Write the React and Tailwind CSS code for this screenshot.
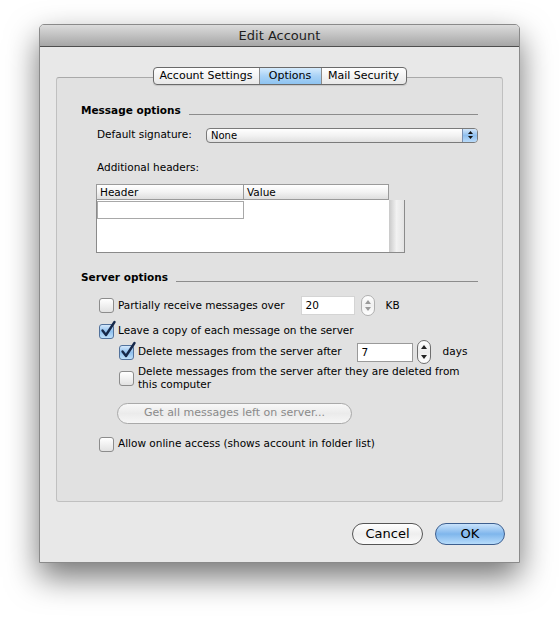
import React from "react";

function Checkbox({ checked }) {
  return (
    <span className="relative inline-block w-[15px] h-[15px] shrink-0">
      {checked ? (
        <span className="block w-full h-full rounded-[3px] border border-[#52729c] bg-gradient-to-b from-[#d4e8fb] via-[#8fc0ee] to-[#bfe0fb]" />
      ) : (
        <span className="block w-full h-full rounded-[3px] border border-[#8c8c8c] bg-gradient-to-b from-[#ffffff] to-[#e2e2e2]" />
      )}
      {checked && (
        <svg className="absolute left-[1px] top-[-4px]" width="17" height="18" viewBox="0 0 17 18">
          <path d="M2.5 10.5 L6 15 L14.5 2" stroke="#16284a" strokeWidth="2.4" fill="none" strokeLinecap="round" strokeLinejoin="round" />
        </svg>
      )}
    </span>
  );
}

function Stepper({ dim, tall }) {
  const c = dim ? "#9a9a9a" : "#222";
  return (
    <div
      className={
        tall
          ? "flex flex-col items-center justify-between w-[14px] h-[24px] py-[4px] rounded-[7px] border border-[#6e6e6e] bg-gradient-to-b from-[#ffffff] via-[#ececec] to-[#ffffff]"
          : "flex flex-col items-center justify-between w-[14px] h-[21px] py-[4px] rounded-[7px] border border-[#b0b0b0] bg-gradient-to-b from-[#ffffff] via-[#f0f0f0] to-[#ffffff]"
      }
    >
      <svg width="6" height="4" viewBox="0 0 6 4"><path d="M3 0 L6 4 L0 4 Z" fill={c} /></svg>
      <svg width="6" height="4" viewBox="0 0 6 4"><path d="M0 0 L6 0 L3 4 Z" fill={c} /></svg>
    </div>
  );
}

export default function App() {
  return (
    <div className="w-[560px] h-[618px] bg-white pl-[39px] pt-[24px] font-['Lucida_Grande','DejaVu_Sans',sans-serif] text-[10.5px] text-black whitespace-nowrap">
      <div className="w-[481px] h-[539px] flex flex-col bg-[#e8e8e8] border border-[#8a8a8a] rounded-t-[5px] shadow-[0_14px_32px_rgba(0,0,0,0.55)]">
        {/* Title bar */}
        <div className="h-[22px] shrink-0 flex items-center justify-center rounded-t-[4px] bg-gradient-to-b from-[#dcdcdc] to-[#a6a6a6] border-b border-[#4e4e4e] text-[13px] text-[#1e1e1e]">
          Edit Account
        </div>

        {/* Tabs + group box */}
        <div className="flex flex-col px-[16px] pt-[20px]">
          <div className="relative z-10 flex justify-center -mb-[8px]">
            <div className="flex h-[18px] rounded-[4px] border border-[#6a6a6a] overflow-hidden bg-gradient-to-b from-[#ffffff] to-[#e8e8e8] shadow-[0_1px_1px_rgba(0,0,0,0.12)] text-[11px]">
              <div className="w-[106px] flex items-center justify-center border-r border-[#8a8a8a]">Account Settings</div>
              <div className="w-[62px] flex items-center justify-center border-r border-[#8a8a8a] bg-gradient-to-b from-[#d7ecfd] via-[#a9d2f6] to-[#8ec4f1]">Options</div>
              <div className="w-[84px] flex items-center justify-center">Mail Security</div>
            </div>
          </div>

          <div className="h-[425px] rounded-[3px] border border-[#c0c0c0] border-t-[#a9a9a9] bg-[#e1e1e1] flex flex-col pt-[26px] pr-[24px]">
            {/* Message options header */}
            <div className="flex items-center h-[14px] pl-[24px]">
              <span className="font-bold">Message options</span>
              <div className="flex-1 h-px bg-[#8c8c8c] ml-[8px] mt-[7px]" />
            </div>

            {/* Default signature */}
            <div className="flex items-center h-[16px] mt-[9px] pl-[40px]">
              <span className="w-[109px]">Default signature:</span>
              <div className="flex-1 flex h-[15px] rounded-[4px] border border-[#7a7a7a] overflow-hidden bg-gradient-to-b from-[#ffffff] via-[#f2f2f2] to-[#e0e0e0]">
                <div className="flex-1 pl-[4px] text-[10px] leading-[13px]">None</div>
                <div className="w-[15px] flex flex-col items-center justify-center gap-[2px] border-l border-[#7a8fb0] bg-gradient-to-b from-[#d2e6fa] via-[#8fbfee] to-[#b9dbfa]">
                  <svg width="5" height="3" viewBox="0 0 5 3"><path d="M2.5 0 L5 3 L0 3 Z" fill="#111" /></svg>
                  <svg width="5" height="3" viewBox="0 0 5 3"><path d="M0 0 L5 0 L2.5 3 Z" fill="#111" /></svg>
                </div>
              </div>
            </div>

            {/* Additional headers */}
            <div className="flex items-center h-[14px] mt-[18px] pl-[40px]">Additional headers:</div>

            {/* Table */}
            <div className="mt-[9px] ml-[39px] w-[309px] h-[69px] flex flex-col">
              <div className="flex h-[16px] w-[293px]">
                <div className="w-[148px] h-full border border-[#9a9a9a] bg-gradient-to-b from-[#ffffff] via-[#f3f3f3] to-[#dedede] pl-[3px] leading-[15px]">Header</div>
                <div className="flex-1 h-full border border-l-0 border-[#9a9a9a] bg-gradient-to-b from-[#ffffff] via-[#f3f3f3] to-[#dedede] pl-[3px] leading-[15px]">Value</div>
              </div>
              <div className="flex-1 flex border border-t-0 border-[#8a8a8a] bg-white">
                <div className="w-[292px] pt-[1px]">
                  <div className="w-[147px] h-[18px] border border-[#a8a8a8] bg-white" />
                </div>
                <div className="flex-1 bg-gradient-to-r from-[#c9c9c9] via-[#f2f2f2] to-[#e4e4e4]" />
              </div>
            </div>

            {/* Server options header */}
            <div className="flex items-center h-[14px] mt-[18px] pl-[24px]">
              <span className="font-bold">Server options</span>
              <div className="flex-1 h-px bg-[#8c8c8c] ml-[8px] mt-[7px]" />
            </div>

            {/* Row 1 */}
            <div className="flex items-center h-[21px] mt-[10px] pl-[42px]">
              <Checkbox />
              <span className="ml-[4px]">Partially receive messages over</span>
              <div className="ml-[16px] w-[54px] h-[19px] bg-white border border-[#d4d4d4] pl-[4px] leading-[16px]">20</div>
              <div className="ml-[6px]"><Stepper dim /></div>
              <span className="ml-[11px]">KB</span>
            </div>

            {/* Row 2 */}
            <div className="flex items-center h-[18px] mt-[6px] pl-[42px]">
              <Checkbox checked />
              <span className="ml-[4px]">Leave a copy of each message on the server</span>
            </div>

            {/* Row 3 */}
            <div className="flex items-center h-[24px] pl-[62px]">
              <Checkbox checked />
              <span className="ml-[4px]">Delete messages from the server after</span>
              <div className="ml-[15px] w-[56px] h-[19px] bg-white border border-[#9a9a9a] pl-[4px] leading-[16px]">7</div>
              <div className="ml-[4px]"><Stepper tall /></div>
              <span className="ml-[12px]">days</span>
            </div>

            {/* Row 4 */}
            <div className="flex items-start mt-[1px] pl-[62px]">
              <div className="mt-[6px]"><Checkbox /></div>
              <span className="ml-[4px] leading-[13px]">Delete messages from the server after they are deleted from<br />this computer</span>
            </div>

            {/* Button */}
            <div className="mt-[12px] pl-[60px]">
              <div className="w-[235px] h-[21px] rounded-full border border-[#a9a9a9] bg-gradient-to-b from-[#f8f8f8] via-[#ebebeb] to-[#f6f6f6] flex items-center justify-center text-[#8a8a8a] text-[11px]">
                Get all messages left on server...
              </div>
            </div>

            {/* Row 5 */}
            <div className="flex items-center h-[18px] mt-[11px] pl-[42px]">
              <Checkbox />
              <span className="ml-[4px]">Allow online access (shows account in folder list)</span>
            </div>
          </div>
        </div>

        {/* Bottom buttons */}
        <div className="flex justify-end gap-[12px] pr-[14px] mt-[21px]">
          <div className="w-[71px] h-[22px] rounded-full border border-[#555] bg-gradient-to-b from-[#ffffff] via-[#eeeeee] to-[#fbfbfb] flex items-center justify-center text-[13px]">Cancel</div>
          <div className="w-[70px] h-[22px] rounded-full border border-[#3d5f8f] bg-gradient-to-b from-[#c9e3fb] via-[#7fb6ec] to-[#b7dcfb] flex items-center justify-center text-[13px]">OK</div>
        </div>
      </div>
    </div>
  );
}
